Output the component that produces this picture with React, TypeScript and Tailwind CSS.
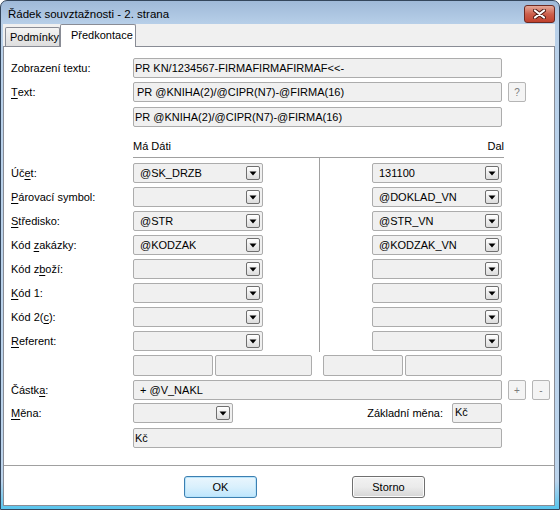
import React from "react";

// Win7-style dialog "Řádek souvztažnosti - 2. strana"

const box = "h-[20px] border border-[#acacac] rounded-[2px] bg-[#f0f0f0] flex items-center shrink-0";

function DropArrow() {
  return (
    <div className="w-[14px] h-[14px] shrink-0 rounded-[2px] border border-[#6f6f6f] bg-gradient-to-b from-[#ffffff] to-[#dcdcdc] flex items-center justify-center">
      <svg width="8" height="5" viewBox="0 0 8 5">
        <path d="M0.5 0.5 H7.5 L4 4.5 Z" fill="#000" />
      </svg>
    </div>
  );
}

function Combo({ value = "", width = "w-[130px]" }: { value?: string; width?: string }) {
  return (
    <div className={`${box} ${width} justify-between pl-[6px] pr-[2px]`}>
      <span className="truncate">{value}</span>
      <DropArrow />
    </div>
  );
}

function Label({ pre = "", u, post = "" }: { pre?: string; u: string; post?: string }) {
  return (
    <div className="w-[129px] shrink-0 pl-[7px] h-[20px] flex items-center whitespace-pre">
      {pre}
      <u className="underline-offset-[2px]">{u}</u>
      {post}
    </div>
  );
}

function SmallBtn({ children }: { children: React.ReactNode }) {
  return (
    <div className="w-[18px] h-[20px] shrink-0 border border-[#b5b5b5] rounded-[2px] bg-[#f4f4f4] flex items-center justify-center text-[#7c7c7c] text-[10px]">
      {children}
    </div>
  );
}

const leftRows: { pre?: string; u: string; post?: string; left: string; right: string }[] = [
  { pre: "Úč", u: "e", post: "t:", left: "@SK_DRZB", right: "131100" },
  { u: "P", post: "árovací symbol:", left: "", right: "@DOKLAD_VN" },
  { u: "S", post: "tředisko:", left: "@STR", right: "@STR_VN" },
  { pre: "Kód ", u: "z", post: "akázky:", left: "@KODZAK", right: "@KODZAK_VN" },
  { pre: "Kód z", u: "b", post: "oží:", left: "", right: "" },
  { u: "K", post: "ód 1:", left: "", right: "" },
  { pre: "Kód 2(", u: "c", post: "):", left: "", right: "" },
  { u: "R", post: "eferent:", left: "", right: "" },
];

export default function App() {
  return (
    <div className="w-[560px] h-[510px] font-['Liberation_Sans',Arial,sans-serif] text-[11px] text-black">
      <div className="w-full h-full border border-[#34465c] rounded-t-[7px] bg-[linear-gradient(to_bottom,#9fb9d8_0px,#b8d0e9_24px,#bcd4ec_480px,#5cc6ee_506px)] flex flex-col pl-[2px] pr-[4px] pb-[3px]">
        {/* title bar */}
        <div className="h-[23px] -ml-[2px] -mr-[4px] flex items-start justify-between pl-[7px] pr-[4px]">
          <span className="text-[11.5px] leading-[13px] mt-[7px]">Řádek souvztažnosti - 2. strana</span>
          <div className="mt-[4px] w-[31px] h-[18px] rounded-[3px] border border-[#6c2a22] bg-gradient-to-b from-[#e4a898] via-[#cc5f4c] to-[#c0402c] flex items-center justify-center">
            <svg width="13" height="10" viewBox="0 0 13 10">
              <path d="M2 1.5 L11 8.5 M11 1.5 L2 8.5" stroke="#4d1a14" strokeWidth="4" strokeLinecap="round" />
              <path d="M2 1.5 L11 8.5 M11 1.5 L2 8.5" stroke="#ffffff" strokeWidth="2.2" strokeLinecap="round" />
            </svg>
          </div>
        </div>

        {/* body */}
        <div className="flex-1 bg-[#f0f0f0] flex flex-col">
          <div className="h-[22px] flex items-end pl-[2px]">
            <div className="w-[55px] h-[19px] border border-b-0 border-[#898c95] rounded-t-[2px] bg-gradient-to-b from-[#f4f4f4] to-[#dedede] flex items-center pl-[4px] whitespace-nowrap">
              Podmínky
            </div>
            <div className="relative z-10 -mb-px w-[76px] h-[23px] border border-b-0 border-[#898c95] rounded-t-[2px] bg-white flex items-center pl-[10px] pb-[2px]">
              Předkontace
            </div>
          </div>

          <div className="h-[460px] border border-[#898c95] bg-white flex flex-col">
            {/* text rows */}
            <div className="flex items-center mt-[11px]">
              <div className="w-[129px] shrink-0 pl-[7px]">Zobrazení textu:</div>
              <div className={`${box} w-[369px] pl-[1px]`}>PR KN/1234567-FIRMAFIRMAFIRMAF&lt;&lt;-</div>
            </div>
            <div className="flex items-center mt-[4px]">
              <Label u="T" post="ext:" />
              <div className={`${box} w-[369px] pl-[3px]`}>PR @KNIHA(2)/@CIPR(N7)-@FIRMA(16)</div>
              <div className="ml-[6px]">
                <SmallBtn>?</SmallBtn>
              </div>
            </div>
            <div className="flex items-center mt-[5px]">
              <div className="w-[129px] shrink-0" />
              <div className={`${box} w-[369px] pl-[1px]`}>PR @KNIHA(2)/@CIPR(N7)-@FIRMA(16)</div>
            </div>

            {/* column headers */}
            <div className="flex h-[30px]">
              <div className="w-[129px] shrink-0" />
              <div className="w-[371px] flex items-end justify-between pb-[4px] leading-[13px]">
                <span>Má Dáti</span>
                <span>Dal</span>
              </div>
            </div>

            {/* account block */}
            <div className="flex">
              <div className="w-[129px] shrink-0 pt-[6px] flex flex-col gap-[4px]">
                {leftRows.map((r, i) => (
                  <Label key={i} pre={r.pre} u={r.u} post={r.post} />
                ))}
              </div>
              <div className="w-[371px] border-t border-[#a0a0a0] flex">
                <div className="w-[186px] pt-[5px] flex flex-col gap-[4px]">
                  {leftRows.map((r, i) => (
                    <Combo key={i} value={r.left} />
                  ))}
                </div>
                <div className="flex-1 border-l border-[#a0a0a0] pt-[5px] pb-[1px] pr-[2px] flex flex-col items-end gap-[4px]">
                  {leftRows.map((r, i) => (
                    <Combo key={i} value={r.right} />
                  ))}
                </div>
              </div>
            </div>

            {/* small boxes */}
            <div className="flex mt-[3px]">
              <div className="w-[129px] shrink-0" />
              <div className="w-[80px] h-[21px] border border-[#acacac] rounded-[2px] bg-[#f0f0f0]" />
              <div className="ml-[2px] w-[97px] h-[21px] border border-[#acacac] rounded-[2px] bg-[#f0f0f0]" />
              <div className="ml-[11px] w-[80px] h-[21px] border border-[#acacac] rounded-[2px] bg-[#f0f0f0]" />
              <div className="ml-[2px] w-[97px] h-[21px] border border-[#acacac] rounded-[2px] bg-[#f0f0f0]" />
            </div>

            {/* amount */}
            <div className="flex items-center mt-[4px]">
              <Label pre="Částk" u="a" post=":" />
              <div className={`${box} w-[369px] pl-[6px]`}>+ @V_NAKL</div>
              <div className="ml-[6px]">
                <SmallBtn>+</SmallBtn>
              </div>
              <div className="ml-[6px]">
                <SmallBtn>-</SmallBtn>
              </div>
            </div>

            {/* currency */}
            <div className="flex items-center mt-[3px]">
              <Label u="M" post="ěna:" />
              <div className="w-[369px] flex items-center">
                <Combo width="w-[100px]" />
                <div className="flex-1 text-right pr-[9px]">Základní měna:</div>
                <div className="w-[50px] h-[20px] border border-[#acacac] rounded-[2px] bg-[#f0f0f0] pl-[2px] leading-[16px]">Kč</div>
              </div>
            </div>
            <div className="flex items-center mt-[5px]">
              <div className="w-[129px] shrink-0" />
              <div className={`${box} w-[369px] pl-[1px]`}>Kč</div>
            </div>

            {/* buttons */}
            <div className="mt-[17px] border-t border-[#a0a0a0]" />
            <div className="flex mt-[10px] pl-[180px]">
              <div className="w-[73px] h-[22px] rounded-[3px] border border-[#3c7fb1] bg-gradient-to-b from-[#eaf6fd] via-[#d9f0fc] to-[#bee6fd] flex items-center justify-center shadow-[inset_0_0_0_1px_#b8e4fb]">
                OK
              </div>
              <div className="ml-[95px] w-[73px] h-[22px] rounded-[3px] border border-[#707070] bg-gradient-to-b from-[#f2f2f2] via-[#ebebeb] to-[#d5d5d5] flex items-center justify-center shadow-[inset_0_0_0_1px_#fcfcfc]">
                Storno
              </div>
            </div>
          </div>
        </div>
      </div>
    </div>
  );
}
